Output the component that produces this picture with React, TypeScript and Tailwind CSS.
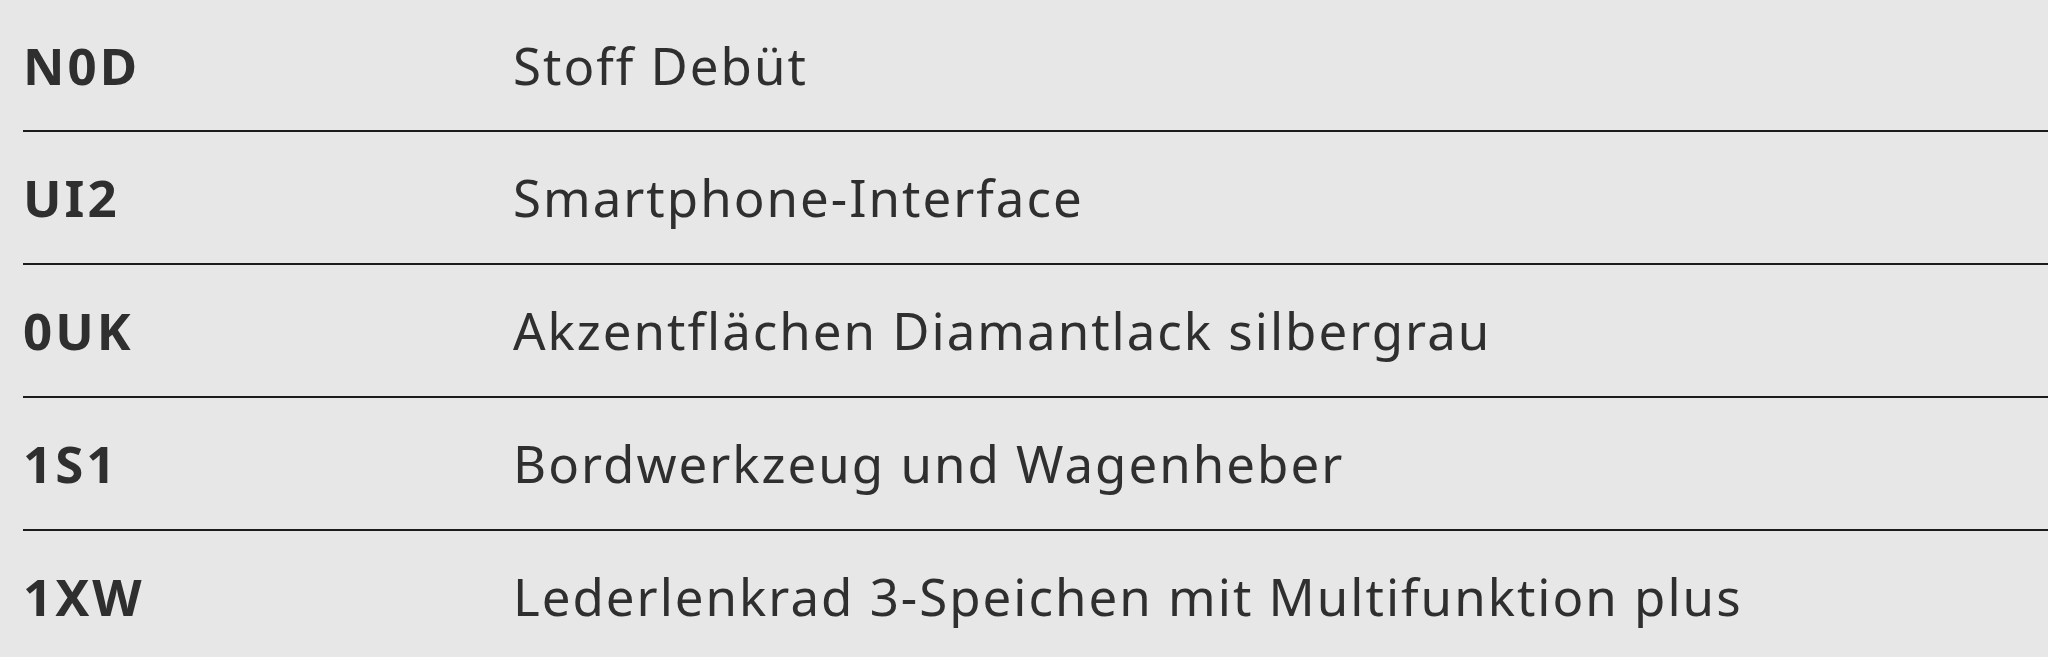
import React from 'react'

const rows = [
    { code: 'N0D', label: 'Stoff Debüt' },
    { code: 'UI2', label: 'Smartphone-Interface' },
    { code: '0UK', label: 'Akzentflächen Diamantlack silbergrau' },
    { code: '1S1', label: 'Bordwerkzeug und Wagenheber' },
    { code: '1XW', label: 'Lederlenkrad 3-Speichen mit Multifunktion plus' },
]

const App = () => {
    return (
        <div className="h-[657px] w-full overflow-hidden bg-[#e7e7e7] pl-[23px] text-[#2f2f2f] font-['Noto_Sans','Liberation_Sans',sans-serif]">
            {rows.map((row, i) => (
                <div
                    key={row.code}
                    className={`flex items-center border-b-2 border-[#1c1c1c] ${i === 0 ? 'h-[132px]' : 'h-[133px]'}`}
                >
                    <div className="w-[490px] shrink-0 text-[51px] font-bold tracking-[3px]">{row.code}</div>
                    <div className="text-[51px] tracking-[2px]">{row.label}</div>
                </div>
            ))}
        </div>
    )
}

export default App
